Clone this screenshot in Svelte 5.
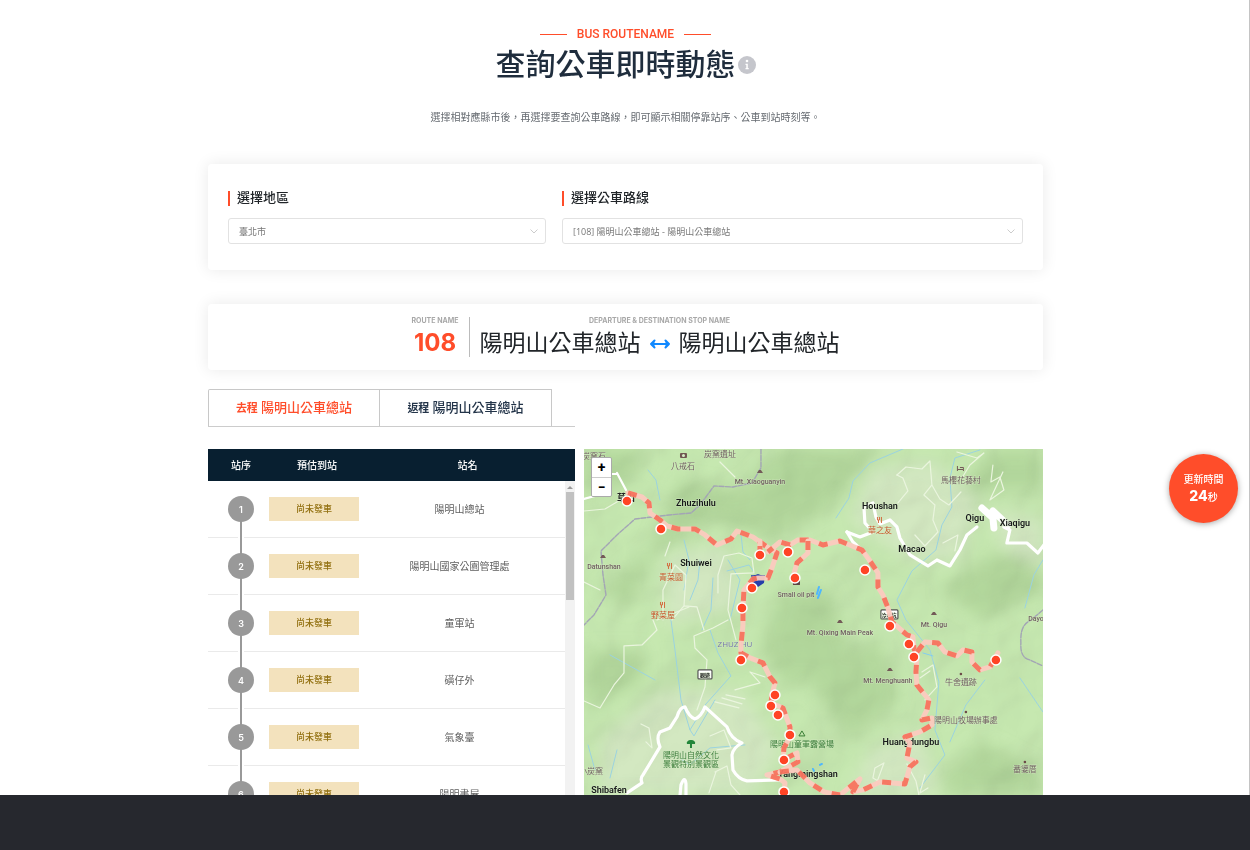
<script>
  const stops = ['陽明山總站', '陽明山國家公園管理處', '童軍站', '磺仔外', '氣象臺', '陽明書屋'];

  const route = [
    'M628 493L642 497L649 503L650 513L660 520L667 526L678 529L695 529L705 535L717 545L731 539L737 531L753 537L767 547L777 553L772 568L768 578L758 578L753 579L744 590L743 608L743 625L741 645L741 653L750 658L763 663L770 677L775 683L772 695L771 703L783 708L790 727L790 737L784 748L783 760L797 753L798 762L780 772L767 775L780 779L785 783L784 795',
    'M780 772L797 770L810 783L824 792L840 795L860 779L853 792L863 790L880 782L905 784L910 767L916 762L907 758L910 743L905 737L920 732L932 725L932 718L922 720L927 710L929 700L917 685L916 672L917 658L914 648L913 637L907 635L892 622L888 608L883 595L878 587L878 573L868 558L862 550L840 541L823 545L810 540L798 540L790 545L780 542L768 552',
    'M917 652L925 642L938 643L945 652L957 656L963 650L972 652L972 662L980 670L990 667L998 653',
    'M808 541L808 553L797 563L793 578M760 555V541'
  ];

  const pins = [
    [627, 501], [661, 529], [760, 555], [788, 552], [795, 578], [752, 588], [742, 608],
    [741, 660], [775, 695], [771, 706], [778, 715], [790, 735], [784, 760], [784, 792],
    [865, 570], [890, 626], [909, 644], [914, 657], [996, 660]
  ];

  const wideRoads = [
    'M847 532L860 537L873 532L865 523L864 507L873 503L876 517L880 524L890 520L897 527L900 538L910 555L928 566L937 560L950 566L960 550L967 535L977 527',
    'M847 532L853 542L863 551L870 562',
    'M1004 527L1010 530L1007 543L1027 543L1038 553L1044 545',
    'M627 793L642 783Q640 778 643 775L660 747Q656 738 660 732L670 728L677 717Q680 707 685 707Q689 717 695 719Q701 717 705 707L727 727Q731 739 742 743Q733 748 732 755L733 770Q738 779 747 781L780 780',
    'M680 796L681 785Q685 775 686 784V796'
  ];

  const thinRoads = [
    'M584 511L605 509L622 499', 'M663 620V590L675 565L686 575L684 606L672 620M684 606L697 607L704 630',
    'M657 620L689 607M665 556L670 542M718 593V575L724 556L739 553L752 558L754 573L731 574L728 610L736 640',
    'M584 701L600 708L614 685L624 673V646L642 645L657 630L653 620', 'M584 582L600 590M735 477L720 462',
    'M728 620L713 628L694 636L695 648L707 660L705 687L697 710', 'M715 702L739 708M722 698L742 704M726 695L745 699M735 690L760 683L750 672L765 677',
    'M897 475L906 467L922 469L930 461L932 485L924 495L935 505L933 520L938 532L925 546L915 535M932 485L940 499L949 505L961 492',
    'M898 503L908 491L903 478L897 475M943 543L958 535L955 551', 'M957 452L977 458L984 453L970 465L962 478',
    'M993 465L991 482L1000 477L1004 490L990 500L1003 472', 'M922 672L933 665L937 687L925 700M920 678L930 671',
    'M876 785L884 763L875 768L873 778L880 782M907 764L916 781L919 795M925 775L920 793L928 788',
    'M641 724L649 728L652 748L646 742M715 772L727 766L731 785L740 795M709 793L716 772M710 736L724 730L731 748L717 750'
  ];

  const streams = [
    'M903 449L870 463L853 481L849 498L836 518', 'M980 450L955 458L950 478L952 507L942 525L936 550L912 571L897 600L906 620L930 650L939 682L935 730L945 755L920 788',
    'M671 620L675 650L681 700L690 730L706 704L731 676L718 653L710 630', 'M690 730L694 736L715 700', 'M728 560L740 580L735 600L730 620',
    'M741 534L743 552L750 560M727 571L749 565L754 572', 'M1043 560L1034 575L1025 608', 'M950 742L966 705L985 680M1020 678L1043 712',
    'M588 745L595 770M617 750L610 778M610 655L655 680M745 745L710 748L690 765L682 760', 'M660 500L656 480L648 470',
    'M684 540L689 560L684 590M700 560L698 580L690 600M713 578L711 610L702 630'
  ];

  const trails = [
    'M761 449V468L752 483L733 487L714 486L700 505L691 513L669 515L635 519L617 535L601 551L603 575L606 595L594 615L584 625',
    'M1043 610L1030 621Q1020 625 1021 643Q1020 658 1030 660L1043 666'
  ];

  const labels = [
    ['Zhuzihulu', 696, 506, 'town'], ['Shuiwei', 696, 566, 'town'], ['Houshan', 880, 509, 'town'], ['Macao', 912, 552, 'town'],
    ['Qigu', 975, 521, 'town'], ['Xiaqigu', 1015, 526, 'town'], ['Huangdungbu', 911, 745, 'town'], ['Yangmingshan', 808, 777, 'town'],
    ['Shibafen', 609, 793, 'town'], ['Mt. Xiaoguanyin', 760, 484, 'peak'], ['Datunshan', 604, 569, 'peak'], ['Small oil pit', 796, 597, 'peak'],
    ['Mt. Qixing Main Peak', 840, 635, 'peak'], ['Mt. Qigu', 934, 627, 'peak'], ['Mt. Menghuanh', 888, 683, 'peak'], ['Dayou', 1038, 621, 'peak'],
    ['ZHUZIHU', 735, 647, 'area'], ['八戒石', 683, 469, 'site'], ['炭窯遺址', 720, 457, 'site'], ['炭窯石', 594, 459, 'site'],
    ['馬櫻花藝村', 961, 483, 'site'], ['牛舍遺跡', 961, 685, 'site'], ['陽明山牧場辦事處', 966, 723, 'site'], ['番婆厝', 1025, 772, 'site'],
    ['小炭窯', 591, 774, 'site'], ['青菜園', 671, 580, 'food'], ['野菜屋', 663, 618, 'food'], ['華之友', 880, 533, 'food'],
    ['陽明山自然文化', 691, 758, 'park'], ['景觀特別景觀區', 691, 767, 'park'], ['陽明山童軍露營場', 802, 747, 'park'], ['草山', 626, 501, 'place']
  ];

  const peaks = [[760, 472], [603, 557], [840, 622], [934, 614], [890, 670]];
  const sites = [[961, 674], [966, 712], [1025, 762]];
  const forks = [[670, 566], [663, 605], [880, 520]];
</script>

<div class="page">
  <main>
    <header>
      <p class="eyebrow">BUS ROUTENAME</p>
      <h1>
        查詢公車即時動態
        <svg class="info" viewBox="0 0 18 18" aria-hidden="true">
          <circle cx="9" cy="9" r="9" fill="#c5c6cc" />
          <circle cx="9" cy="5" r="1.3" fill="#fff" />
          <path d="M7.5 7.7h2.3v4.400h.9v1.200H7.5v-1.200h.8V8.900h-.8z" fill="#fff" />
        </svg>
      </h1>
      <p class="intro">選擇相對應縣市後，再選擇要查詢公車路線，即可顯示相關停靠站序、公車到站時刻等。</p>
    </header>

    <form class="card filters">
      <div class="field">
        <label for="city">選擇地區</label>
        <select id="city"><option>臺北市</option></select>
      </div>
      <div class="field">
        <label for="route">選擇公車路線</label>
        <select id="route"><option>[108] 陽明山公車總站 - 陽明山公車總站</option></select>
      </div>
    </form>

    <section class="card summary">
      <div class="number">
        <small>ROUTE NAME</small>
        <strong>108</strong>
      </div>
      <div class="ends">
        <small>DEPARTURE &amp; DESTINATION STOP NAME</small>
        <h2>
          <span>陽明山公車總站</span>
          <svg viewBox="0 0 20 12" aria-hidden="true">
            <path d="M1 6H19M4.5 2.5L1 6L4.5 9.5M15.5 2.5L19 6L15.5 9.5" fill="none" stroke="#1189ff" stroke-linejoin="round" stroke-linecap="round" stroke-width="2" />
            <path d="M1 6L4.5 2.5V9.5zM19 6L15.5 2.5V9.5z" fill="#1189ff" />
          </svg>
          <span>陽明山公車總站</span>
        </h2>
      </div>
    </section>

    <div class="columns">
      <section class="schedule">
        <nav>
          <button class="active" type="button"><b>去程</b> 陽明山公車總站</button>
          <button type="button"><b>返程</b> 陽明山公車總站</button>
        </nav>
        <div class="list">
          <table>
            <thead>
              <tr><th>站序</th><th>預估到站</th><th>站名</th></tr>
            </thead>
            <tbody>
              {#each stops as stop, i}
                <tr>
                  <td class="order"><span>{i + 1}</span></td>
                  <td><span class="status">尚未發車</span></td>
                  <td class="name">{stop}</td>
                </tr>
              {/each}
            </tbody>
          </table>
          <div class="scroll"><i></i><div></div></div>
        </div>
      </section>

      <section class="map">
        <svg viewBox="584 449 459 346" preserveAspectRatio="xMinYMin slice" role="img" aria-label="Map">
          <defs>
            <filter id="soft" x="-30%" y="-30%" width="160%" height="160%"><feGaussianBlur stdDeviation="8" /></filter>
            <filter id="relief" x="0" y="0" width="100%" height="100%">
              <feTurbulence type="fractalNoise" baseFrequency=".014" numOctaves="3" seed="11" result="n" />
              <feDiffuseLighting in="n" surfaceScale="14" lighting-color="#ffffff"><feDistantLight azimuth="225" elevation="58" /></feDiffuseLighting>
            </filter>
          </defs>
          <rect x="584" y="449" width="459" height="346" fill="#c6e8b0" />
          <g filter="url(#soft)">
            <path fill="#add396" d="M584 449h60l-10 30-50 15zM600 590l50-40 30-70 60 10 40-41 100 0-50 60-60 30-60-20-60 40-20 50zM780 590l50 0 20 60-60 40-30-40zM800 670l80-30 20 60-50 40zM940 590l60-40 43 10v30l-60 30zM584 650l60 0 0 30-60 30zM940 780l40-40 60 30v25h-90zM960 490l30-40 53 0v40z" opacity=".75" />
            <path fill="#d6e8c6" d="M870 470l60-10 50 40-20 60-50 0-60-40zM600 740l60-50 80 0 40 60-30 45H600zM870 750l50-20 20 65h-90zM665 555l60-10 20 60-80 20zM990 510l53 10v50l-40-20z" opacity=".8" />
          </g>
          <rect class="hills" x="584" y="449" width="459" height="346" filter="url(#relief)" opacity=".18" />
          <g fill="none" stroke-linejoin="round" stroke-linecap="round">
            {#each streams as d}<path {d} stroke="#9bd3e0" stroke-width="1" />{/each}
            {#each trails as d}<path {d} stroke="#a3a5b5" stroke-width="1.4" stroke-dasharray="5 1.5" />{/each}
            {#each thinRoads as d}<path {d} stroke="#eaf5de" stroke-width="1.2" />{/each}
            {#each wideRoads as d}<path {d} stroke="#fff" stroke-width="3.2" />{/each}
            <path d="M982 508L993 518L994 528M993 511L1008 525" stroke="#fff" stroke-width="7" />
            <path d="M584 499L602 494M617 473L626 490M612 474H617" stroke="#fff" stroke-width="2.2" />
            <path d="M819 587L817 594M821 590L818 598M814 771L813 769M820 765L822 764" stroke="#4db7ff" stroke-width="2" />
            <path d="M923 653L933 656" stroke="#83cdf0" />
          </g>
          {#each labels as [text, x, y, kind]}<text {x} {y} class={kind}>{text}</text>{/each}
          {#each peaks as [x, y]}<path d="M{x - 3} {y + 1}L{x - 1} {y - 2}H{x + 1}L{x + 3} {y + 1}z" fill="#735a58" />{/each}
          {#each sites as [cx, cy]}<circle {cx} {cy} r="1.3" fill="#6b4a48" />{/each}
          {#each forks as [x, y]}<path d="M{x - 1.5} {y}V{y + 3}M{x + 1.5} {y - 3}V{y + 3}M{x - 2.5} {y - 3}V{y}H{x - 0.5}V{y - 3}" fill="none" stroke="#d3693d" />{/each}
          <g>
            <rect x="680" y="453" width="7" height="5" rx="1" fill="#705651" /><circle cx="683.5" cy="455.5" r="1.5" fill="#d8ecc8" />
            <path d="M957.5 471v-5M957.5 469.5h6v1.5M960 467.5h3.5v2" fill="none" stroke="#745957" />
            <path d="M691 740a4 3 0 0 0-4 4h3v4h2v-4h3a4 3 0 0 0-4-4z" fill="#23863a" />
            <path d="M799 736L802 731L805 736z" fill="none" stroke="#397e35" />
            <path d="M751 575Q754 576 758 574Q762 576 765 575L764 583L758 587L753 583z" fill="#263eaa" />
            <g fill="#fff" stroke="#555" stroke-width="1.2"><rect x="698" y="670" width="14" height="9" rx="1" /><rect x="881" y="610" width="17" height="9" rx="1" /></g>
            <text x="705" y="677" class="shield">觀遊</text><text x="889" y="617" class="shield">冷水坑</text>
            <rect x="793" y="580" width="7" height="5" fill="#5a4240" />
          </g>
          <g fill="none" stroke-width="5" stroke-linejoin="round" opacity=".95">
            {#each route as d}
              <path {d} stroke="#fccbbf" stroke-linecap="round" />
              <path {d} stroke="#f9735f" stroke-dasharray="9 11" />
            {/each}
          </g>
          {#each pins as [cx, cy]}<circle {cx} {cy} r="5" fill="#ff4425" stroke="#fff" stroke-width="1.5" />{/each}
        </svg>
        <div class="zoom">
          <button type="button" aria-label="Zoom in">+</button>
          <button type="button" aria-label="Zoom out">−</button>
        </div>
      </section>
    </div>
  </main>
  <footer></footer>
  <button class="refresh" type="button">
    <span>更新時間</span>
    <span><b>24</b>秒</span>
  </button>
</div>

<style>
  :global(body) { background: #fff; }
  * { box-sizing: border-box; }
  .page {
    display: flex; flex-direction: column; height: 100vh; padding-left: 1px;
    font-family: Roboto, "Noto Sans CJK TC", sans-serif; color: #212529;
    box-shadow: inset -1px 0 #c4c4c4;
  }
  main {
    display: flex; flex: 1; flex-direction: column; min-height: 0; overflow: hidden;
    width: 100%; padding: 24px 16px 0;
  }
  main > * { width: 100%; max-width: 835px; margin-left: auto; margin-right: auto; flex-shrink: 0; }
  header { text-align: center; }
  p, h1, h2 { margin: 0; font-weight: 400; }
  .eyebrow {
    display: flex; align-items: center; justify-content: center; gap: 10px;
    font: 500 12px/20px Roboto, sans-serif; color: #ff4d2a;
  }
  .eyebrow::before, .eyebrow::after { content: ""; width: 27px; height: 1px; background: #ff4d2a; }
  h1 {
    display: flex; align-items: center; justify-content: center; gap: 2px; padding-top: 1px;
    font-size: 30px; line-height: 40px; font-weight: 500; color: #1f2d3d;
  }
  .info { width: 18px; height: 18px; }
  .intro { margin-top: 22px; padding-top: 1px; font-size: 10px; line-height: 20px; color: #656a70; }
  .card { background: #fff; border-radius: 4px; box-shadow: 0 0 16px rgba(0, 0, 0, .09); }
  .filters {
    display: grid; grid-template-columns: 20fr 29fr; gap: 16px;
    margin-top: 36px; padding: 24px 20px 26px;
  }
  .field { display: flex; flex-direction: column; gap: 10px; min-width: 0; }
  label { display: flex; align-items: center; gap: 7px; font-size: 13px; line-height: 20px; font-weight: 500; }
  label::before { content: ""; width: 2px; height: 15px; background: #ff4d2a; }
  select {
    appearance: none; width: 100%; height: 26px; padding: 0 24px 0 10px;
    border: 1px solid #e2e2e2; border-radius: 3px; color: #777;
    font: 9px "Open Sans", "Noto Sans CJK TC", sans-serif;
    background: #fff url("data:image/svg+xml,%3Csvg xmlns='http://www.w3.org/2000/svg' width='8' height='5'%3E%3Cpath d='M.5.5 4 4 7.5.5' fill='none' stroke='%23ccc'/%3E%3C/svg%3E") no-repeat right 7px center;
  }
  .summary { display: flex; justify-content: center; margin-top: 34px; padding: 13px 20px; }
  .number, .ends { display: flex; flex-direction: column; align-items: center; height: 40px; }
  .number { padding-right: 10px; border-right: 1px solid #bbb; }
  .ends { padding-left: 10px; }
  small { font: 700 7px/8px Inter, sans-serif; color: #a8a8a8; }
  strong { font: 700 24px/36px Inter, sans-serif; color: #ff4d2a; }
  h2 { display: flex; align-items: center; gap: 9px; font-size: 23px; line-height: 38px; white-space: nowrap; }
  h2 svg { width: 20px; height: 12px; }
  .columns { display: grid; grid-template-columns: 4fr 5fr; column-gap: 9px; margin-top: 19px; align-items: end; }
  .schedule { min-width: 0; }
  nav { display: flex; border-bottom: 1px solid #ccc; }
  nav button {
    width: 172px; height: 37px; padding: 0; border: 1px solid #c8c8c8; border-bottom: 0; background: #fff;
    color: #233449; font: 500 13px/20px Roboto, "Noto Sans CJK TC", sans-serif;
  }
  nav button:first-child { border-radius: 2px 0 0; }
  nav button + button { border-left: 0; }
  nav .active { color: #ff4d2a; }
  nav b { font-size: 11px; font-weight: 700; }
  .list { position: relative; margin-top: 22px; }
  table, thead, tbody { display: block; }
  tr { display: grid; align-items: center; }
  th, td { padding: 0; text-align: center; line-height: 15px; }
  thead tr { grid-template-columns: 66px 86px 1fr; height: 32px; background: #081f30; }
  th { font-size: 10px; font-weight: 500; color: #fff; }
  tbody { margin-right: 10px; }
  tbody tr { grid-template-columns: 61px 90px 1fr; height: 57px; border-bottom: 1px solid #eaeaea; }
  .order { position: relative; padding-left: 20px; }
  .order span {
    position: relative; display: grid; place-items: center; width: 26px; height: 26px;
    border-radius: 50%; background: #999; color: #fff; font: 600 9px Inter, sans-serif;
  }
  .order::before {
    content: ""; position: absolute; left: 30px; top: 13px; width: 2px; height: 57px;
    background: #999; border: solid #fff; border-width: 0 2px; background-clip: padding-box;
  }
  .status { display: block; height: 24px; background: #f3e2bd; color: #927010; font-size: 9px; line-height: 24px; font-weight: 500; }
  .name { padding-right: 5px; font-size: 10px; color: #606060; }
  .scroll { position: absolute; top: 32px; right: 0; bottom: 0; width: 10px; padding: 11px 1px 0; background: #f2f2f2; }
  .scroll i { position: absolute; left: 2px; top: 5px; border: 3px solid transparent; border-top: 0; border-bottom: 3px solid #999; }
  .scroll div { height: 108px; background: #c1c1c1; }
  .map { position: relative; align-self: stretch; margin-top: 60px; min-height: 346px; overflow: hidden; background: #c6e8b0; }
  .map > svg { display: block; width: 100%; }
  .hills { mix-blend-mode: multiply; }
  .map text { text-anchor: middle; font-family: Roboto, "Noto Sans CJK TC", sans-serif; font-size: 8px; paint-order: stroke; stroke: #d5ebc499; stroke-width: 1px; }
  .map .town { font-size: 9px; font-weight: 600; fill: #17191a; }
  .map .peak { font-size: 7px; font-weight: 500; fill: #705f61; }
  .map .site { font-size: 8px; fill: #705f61; }
  .map .food { fill: #c9592e; }
  .map .park { fill: #397b39; }
  .map .area { font-family: "Open Sans", sans-serif; fill: #7477aa; }
  .map .place { font-size: 9px; fill: #222; font-weight: 700; }
  .map .shield { font-size: 5px; fill: #222; font-weight: 700; }
  .zoom { position: absolute; left: 7px; top: 8px; border: 1px solid #aaa; border-radius: 2px; overflow: hidden; }
  .zoom button {
    display: block; width: 19px; height: 19px; padding: 0; border: 0; background: #fff;
    color: #000; font: 700 14px/19px Roboto, sans-serif;
  }
  .zoom button + button { border-top: 1px solid #ccc; }
  footer { position: relative; flex: 0 0 55px; margin-left: -1px; background: #26282e; }
  .refresh {
    position: fixed; right: 12px; top: 454px; width: 69px; height: 69px; padding: 0; border: 0; border-radius: 50%;
    display: flex; flex-direction: column; align-items: center; justify-content: center;
    background: #ff4d2a; color: #fff; box-shadow: 0 1px 6px rgba(0, 0, 0, .35);
    font: 500 10px/16px Roboto, "Noto Sans CJK TC", sans-serif;
  }
  .refresh b { font: 800 14px/16px Inter, sans-serif; }
</style>
